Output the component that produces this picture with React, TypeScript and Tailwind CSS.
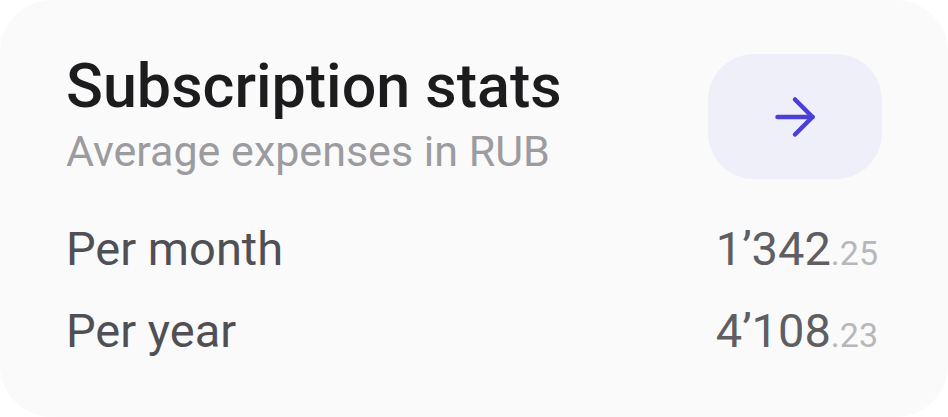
import { ArrowRight } from "lucide-react";

const rows = [
  { label: "Per month", whole: "1’342", cents: ".25" },
  { label: "Per year", whole: "4’108", cents: ".23" },
];

export default function App() {
  return (
    <div className="w-[948px] h-[417px] bg-white font-['Roboto',sans-serif]">
      <div className="w-full h-full rounded-[52px] bg-[#fafafa] px-[66px] pt-[51px]">
        <div className="flex items-start justify-between">
          <div>
            <h1 className="text-[61px] leading-[70px] font-medium text-[#1c1c1e]">
              Subscription stats
            </h1>
            <p className="mt-[5px] text-[43px] leading-[50px] text-[#9b9ba0]">
              Average expenses in RUB
            </p>
          </div>
          <button className="mt-[3px] w-[174px] h-[125px] rounded-[46px] bg-[#efeff9] flex items-center justify-center">
            <ArrowRight className="w-[60px] h-[60px] text-[#4a3fd8]" strokeWidth={1.8} />
          </button>
        </div>
        <div className="mt-[42px] flex flex-col gap-[26px]">
          {rows.map((r) => (
            <div key={r.label} className="flex h-[56px] items-baseline justify-between leading-[56px]">
              <span className="text-[47px] text-[#4f4f55]">{r.label}</span>
              <span className="pr-[4px] text-[47px] text-[#5e5e63]">
                {r.whole}
                <span className="text-[34px] leading-none text-[#b7b7ba]">{r.cents}</span>
              </span>
            </div>
          ))}
        </div>
      </div>
    </div>
  );
}
